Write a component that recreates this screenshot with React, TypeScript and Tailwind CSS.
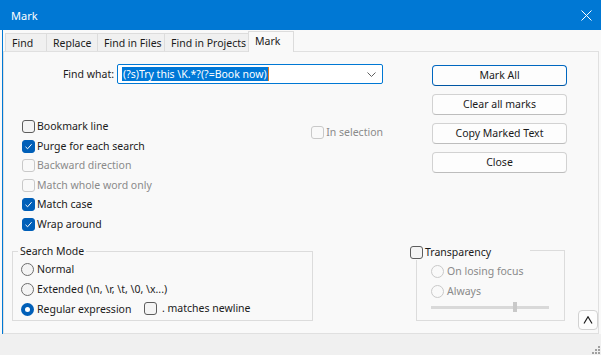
import React from 'react';

const FONT = { fontFamily: '"Noto Sans", "Open Sans", sans-serif' };

function Check({ checked, disabled, label, labelClass = '' }: { checked?: boolean; disabled?: boolean; label: string; labelClass?: string }) {
  const box = checked
    ? 'bg-[#005fb8] border-[#005fb8]'
    : disabled
      ? 'bg-[#f9f9f9] border-[#c9c9c9]'
      : 'bg-[#f4f4f4] border-[#5d5d5d]';
  return (
    <div className="flex h-[19.5px] items-center">
      <div className={`flex h-[13px] w-[13px] shrink-0 items-center justify-center rounded-[3px] border ${box}`}>
        {checked && (
          <svg width="9" height="9" viewBox="0 0 9 9" fill="none">
            <path d="M1.5 4.8 L3.6 6.8 L7.6 2.2" stroke="white" strokeWidth="1" />
          </svg>
        )}
      </div>
      <span className={`ml-[2px] whitespace-nowrap ${disabled ? 'text-[#8a8a8a]' : 'text-[#1b1b1b]'} ${labelClass}`}>{label}</span>
    </div>
  );
}

function Radio({ checked, disabled, label }: { checked?: boolean; disabled?: boolean; label: string }) {
  return (
    <div className="flex h-[20px] items-center">
      {checked ? (
        <div className="flex h-[13px] w-[13px] shrink-0 items-center justify-center rounded-full bg-[#005fb8]">
          <div className="h-[5px] w-[5px] rounded-full bg-white" />
        </div>
      ) : (
        <div className={`h-[13px] w-[13px] shrink-0 rounded-full border ${disabled ? 'border-[#c9c9c9] bg-[#f9f9f9]' : 'border-[#6e6e6e] bg-[#f4f4f4]'}`} />
      )}
      <span className={`ml-[3px] whitespace-nowrap ${disabled ? 'text-[#8a8a8a]' : 'text-[#1b1b1b]'}`}>{label}</span>
    </div>
  );
}

function Btn({ label, primary }: { label: string; primary?: boolean }) {
  return (
    <div
      className={`flex h-[21px] w-[135px] items-center justify-center rounded-[4px] border bg-[#fdfdfd] text-[#1b1b1b] ${
        primary ? 'border-[#0067c0] border-b-[#0056a3]' : 'border-[#d2d2d2] border-b-[#bdbdbd]'
      }`}
    >
      {label}
    </div>
  );
}

const tabs = [
  { name: 'Find', w: 'w-[42px]' },
  { name: 'Replace', w: 'w-[52px]' },
  { name: 'Find in Files', w: 'w-[68px]' },
  { name: 'Find in Projects', w: 'w-[85px]' },
];

export default function App() {
  return (
    <div className="flex h-[355px] w-[601px] flex-col overflow-hidden bg-[#f9f9f9] text-[10.5px] leading-[15px]" style={FONT}>
      {/* title bar */}
      <div className="flex h-[30px] shrink-0 items-center justify-between bg-[#0078d4] pl-[11px] pr-[9px] text-[11px] text-white">
        <span>Mark</span>
        <svg width="11" height="11" viewBox="0 0 11 11">
          <path d="M0.5 0.5 L10.5 10.5 M10.5 0.5 L0.5 10.5" stroke="white" strokeWidth="1" />
        </svg>
      </div>

      <div className="ml-[2px] flex flex-1 flex-col border-l border-[#0078d4]">
        {/* tab strip */}
        <div className="flex h-[21px] shrink-0 items-end pl-[2px]">
          {tabs.map((t, i) => (
            <div
              key={t.name}
              className={`flex h-[18px] ${t.w} items-center whitespace-nowrap border border-b-0 border-[#dcdcdc] bg-[#f0f0f0] pl-[6px] pt-[1px] text-[#1b1b1b] ${i > 0 ? '-ml-px' : ''}`}
            >
              {t.name}
            </div>
          ))}
          <div className="relative z-10 -mb-px -ml-px flex h-[21px] w-[46px] items-start border border-b-0 border-[#dcdcdc] bg-[#f9f9f9] pl-[6px] pt-[2px] text-[#1b1b1b]">
            Mark
          </div>
        </div>

        {/* tab panel */}
        <div className="mr-[2px] flex h-[283px] shrink-0 flex-col border border-[#e0e0e0] bg-[#f9f9f9]">
          <div className="flex h-[192px] shrink-0">
            {/* left column */}
            <div className="flex w-[379px] flex-col">
              <div className="mt-[12px] flex h-[20px] items-center">
                <span className="w-[110px] text-right text-[#1b1b1b]">Find what:</span>
                <div className="ml-[3px] flex h-[20px] w-[266px] items-center rounded-[2px] border border-[#0078d4] bg-white pl-[4px] pr-[6px]">
                  <span className="whitespace-nowrap bg-[#0078d7] px-[1px] leading-[14px] text-white">(?s)Try this \K.*?(?=Book now)</span>
                  <span className="h-[14px] w-px bg-[#e07a20]" />
                  <div className="flex-1" />
                  <svg width="9" height="5" viewBox="0 0 9 5" fill="none">
                    <path d="M0.5 0.5 L4.5 4.5 L8.5 0.5" stroke="#606060" strokeWidth="1" />
                  </svg>
                </div>
              </div>

              <div className="mt-[33px] flex pl-[18px]">
                <div className="flex w-[293px] flex-col">
                  <Check label="Bookmark line" />
                  <Check label="Purge for each search" checked />
                  <Check label="Backward direction" disabled />
                  <Check label="Match whole word only" disabled />
                  <Check label="Match case" checked />
                  <Check label="Wrap around" checked />
                </div>
                <div className="mt-[6px]">
                  <Check label="In selection" disabled />
                </div>
              </div>
            </div>

            {/* buttons */}
            <div className="ml-[49px] mt-[13px] flex flex-col gap-[8px]">
              <Btn label="Mark All" primary />
              <Btn label="Clear all marks" />
              <Btn label="Copy Marked Text" />
              <Btn label="Close" />
            </div>
          </div>

          {/* bottom groups */}
          <div className="flex items-start">
            <fieldset className="ml-[8px] h-[77px] w-[301px] border border-[#dcdcdc] pl-[5px]">
              <legend className="px-[2px] leading-[14px] text-[#1b1b1b]">Search Mode</legend>
              <div className="mt-[1px] flex flex-col pl-[3px]">
                <Radio label="Normal" />
                <Radio label="Extended (\n, \r, \t, \0, \x...)" />
                <div className="flex">
                  <div className="w-[123px] shrink-0">
                    <Radio label="Regular expression" checked />
                  </div>
                  <Check label=". matches newline" labelClass="ml-[5px]" />
                </div>
              </div>
            </fieldset>

            <div className="ml-[97px] flex flex-col">
              <div className="relative z-10 flex h-[16px] w-[120px] items-center bg-[#f9f9f9]">
                <Check label="Transparency" />
              </div>
              <div className="-mt-[10px] ml-[6px] flex h-[71px] w-[149px] flex-col border border-[#dcdcdc] pl-[14px] pt-[10px]">
                <Radio label="On losing focus" disabled />
                <Radio label="Always" disabled />
                <div className="relative mt-[5px] h-[3px] w-[118px] bg-[#d9d9d9]">
                  <div className="absolute left-[82px] top-[-4px] h-[10px] w-[4px] bg-[#c9c9c9]" />
                </div>
              </div>
            </div>

            <div className="ml-[13px] mt-[66px] flex h-[20px] w-[20px] items-center justify-center rounded-[4px] border border-[#d2d2d2] bg-[#fdfdfd]">
              <svg width="10" height="8" viewBox="0 0 10 8" fill="none">
                <path d="M1 7.5 L5 0.8 L9 7.5" stroke="#1b1b1b" strokeWidth="1.2" />
              </svg>
            </div>
          </div>
        </div>

        {/* bottom bar */}
        <div className="-ml-[3px] flex flex-1 items-end justify-end bg-[#f0f0f0] pb-[1px] pr-[1px]">
          <svg width="10" height="10" viewBox="0 0 10 10">
            <rect x="8" y="2" width="2" height="2" fill="#a0a0a0" />
            <rect x="5" y="5" width="2" height="2" fill="#a0a0a0" />
            <rect x="8" y="5" width="2" height="2" fill="#a0a0a0" />
            <rect x="2" y="8" width="2" height="2" fill="#a0a0a0" />
            <rect x="5" y="8" width="2" height="2" fill="#a0a0a0" />
            <rect x="8" y="8" width="2" height="2" fill="#a0a0a0" />
          </svg>
        </div>
      </div>
    </div>
  );
}
